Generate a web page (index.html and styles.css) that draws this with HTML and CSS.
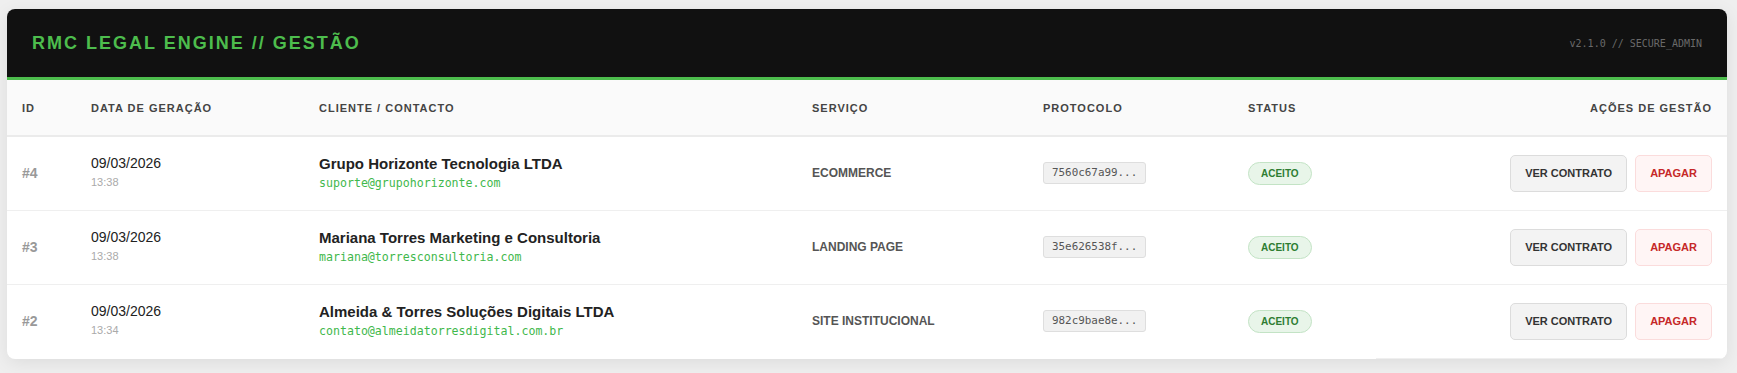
FILE: index.html
```html
<!DOCTYPE html>
<html lang="pt">
<head>
<meta charset="utf-8">
<title>RMC Legal Engine // Gestão</title>
<link rel="stylesheet" href="styles.css">
</head>
<body>
<div class="card">
  <header class="topbar">
    <h1 class="title">RMC LEGAL ENGINE // GESTÃO</h1>
    <span class="version">v2.1.0 // SECURE_ADMIN</span>
  </header>
  <table class="grid">
    <colgroup>
      <col class="c-id"><col class="c-date"><col class="c-client"><col class="c-service"><col class="c-proto"><col class="c-status"><col class="c-actions">
    </colgroup>
    <thead>
      <tr>
        <th>ID</th>
        <th>Data de Geração</th>
        <th>Cliente / Contacto</th>
        <th>Serviço</th>
        <th>Protocolo</th>
        <th>Status</th>
        <th class="right">Ações de Gestão</th>
      </tr>
    </thead>
    <tbody>
      <tr>
        <td class="id">#4</td>
        <td><div class="stack"><div class="date">09/03/2026</div><div class="time">13:38</div></div></td>
        <td><div class="stack"><div class="name">Grupo Horizonte Tecnologia LTDA</div><div class="email">suporte@grupohorizonte.com</div></div></td>
        <td class="service">ECOMMERCE</td>
        <td><span class="proto">7560c67a99...</span></td>
        <td><span class="badge">ACEITO</span></td>
        <td class="actions"><div class="btns"><button class="btn btn-view">VER CONTRATO</button><button class="btn btn-del">APAGAR</button></div></td>
      </tr>
      <tr>
        <td class="id">#3</td>
        <td><div class="stack"><div class="date">09/03/2026</div><div class="time">13:38</div></div></td>
        <td><div class="stack"><div class="name">Mariana Torres Marketing e Consultoria</div><div class="email">mariana@torresconsultoria.com</div></div></td>
        <td class="service">LANDING PAGE</td>
        <td><span class="proto">35e626538f...</span></td>
        <td><span class="badge">ACEITO</span></td>
        <td class="actions"><div class="btns"><button class="btn btn-view">VER CONTRATO</button><button class="btn btn-del">APAGAR</button></div></td>
      </tr>
      <tr class="last">
        <td class="id">#2</td>
        <td><div class="stack"><div class="date">09/03/2026</div><div class="time">13:34</div></div></td>
        <td><div class="stack"><div class="name">Almeida &amp; Torres Soluções Digitais LTDA</div><div class="email">contato@almeidatorresdigital.com.br</div></div></td>
        <td class="service">SITE INSTITUCIONAL</td>
        <td><span class="proto">982c9bae8e...</span></td>
        <td><span class="badge">ACEITO</span></td>
        <td class="actions"><div class="btns"><button class="btn btn-view">VER CONTRATO</button><button class="btn btn-del">APAGAR</button></div></td>
      </tr>
    </tbody>
  </table>
</div>
</body>
</html>
```

FILE: styles.css
```css
* { box-sizing: border-box; }

html, body {
  margin: 0;
  background: #efefef;
}

body {
  padding: 9px 10px 14px 7px;
  font-family: "Liberation Sans", Arial, sans-serif;
  color: #222;
}

.card {
  width: 1720px;
  background: #fff;
  border-radius: 8px;
  overflow: hidden;
  box-shadow: 0 4px 18px rgba(0, 0, 0, 0.08);
}

.topbar {
  height: 71px;
  background: #111;
  border-bottom: 3px solid #4dbd4d;
  display: flex;
  align-items: center;
  justify-content: space-between;
  padding: 0 25px 0 25px;
}

.title {
  margin: 0;
  font-size: 18px;
  font-weight: 700;
  letter-spacing: 2px;
  color: #4dbd4d;
  line-height: 20px;
}

.version {
  font-family: "DejaVu Sans Mono", monospace;
  font-size: 10px;
  color: #6a6a6a;
}

.grid {
  width: 100%;
  border-collapse: collapse;
  table-layout: fixed;
}

.c-id { width: 69px; }
.c-date { width: 228px; }
.c-client { width: 493px; }
.c-service { width: 231px; }
.c-proto { width: 205px; }
.c-status { width: 143px; }
.c-actions { width: 351px; }

.grid th {
  height: 56px;
  background: #fafafa;
  border-bottom: 2px solid #ebebeb;
  padding: 0 15px;
  text-align: left;
  font-size: 11px;
  font-weight: 700;
  letter-spacing: 1px;
  text-transform: uppercase;
  color: #444;
}

.grid th.right {
  text-align: right;
  padding-right: 15px;
}

.grid td {
  height: 74px;
  padding: 0 15px;
  border-bottom: 1px solid #efefef;
  vertical-align: middle;
}

.grid tr.last td {
  border-bottom-color: transparent;
}

.grid tr.last td.actions {
  border-bottom-color: #efefef;
}

.stack {
  margin-top: -2px;
}

.id {
  font-size: 14px;
  font-weight: 700;
  color: #999;
}

.date {
  font-size: 14px;
  line-height: 17px;
  color: #222;
}

.time {
  font-size: 11px;
  line-height: 14px;
  margin-top: 3px;
  color: #aaa;
}

.name {
  font-size: 15px;
  font-weight: 700;
  line-height: 18px;
  color: #222;
}

.email {
  font-family: "DejaVu Sans Mono", monospace;
  font-size: 11.6px;
  line-height: 14px;
  margin-top: 3px;
  color: #3fb84c;
}

.service {
  font-size: 12px;
  font-weight: 700;
  color: #555;
  padding-top: 2px;
}

.proto {
  display: inline-block;
  padding: 0 8px;
  height: 22px;
  line-height: 20px;
  background: #f1f1f1;
  border: 1px solid #dedede;
  border-radius: 3px;
  font-family: "DejaVu Sans Mono", monospace;
  font-size: 10.9px;
  color: #555;
}

.badge {
  display: inline-block;
  padding: 0 12px;
  height: 23px;
  line-height: 21px;
  background: #e8f5e9;
  border: 1px solid #c3e3c5;
  border-radius: 12px;
  font-size: 10px;
  font-weight: 700;
  color: #2e7d32;
}

.actions {
  padding-right: 15px;
}

.btns {
  display: flex;
  justify-content: flex-end;
  gap: 8px;
}

.btn {
  font-family: "Liberation Sans", Arial, sans-serif;
  font-size: 11px;
  font-weight: 700;
  line-height: 13px;
  padding: 11px 14px;
  border-radius: 5px;
  cursor: pointer;
}

.btn-view {
  background: #f3f3f3;
  border: 1px solid #dcdcdc;
  color: #333;
}

.btn-del {
  background: #fff5f5;
  border: 1px solid #fbdcdc;
  color: #c62828;
}
```
